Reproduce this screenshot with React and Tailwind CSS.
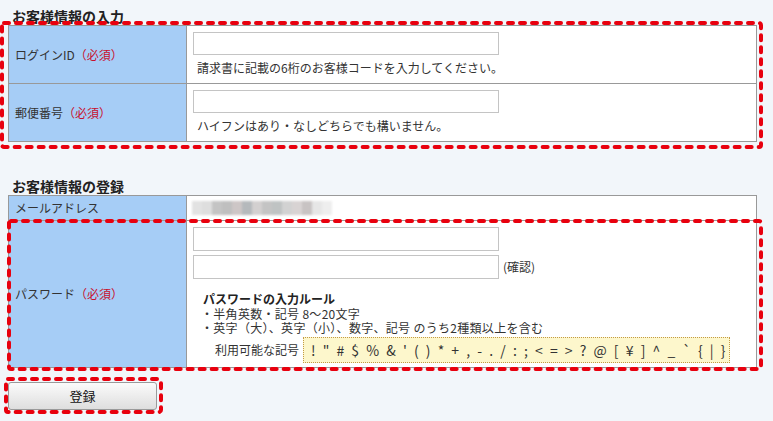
import React from 'react';

const FONT = '"Noto Sans CJK JP", "Noto Sans", sans-serif';
const SYMBOLS = '! " # $ % & \' ( ) * + , - . / : ; < = > ? @ [ ¥ ] ^ _ ` { | }';
const BLUR_GRAYS = ['#e2e2e2', '#dedede', '#c4c4c4', '#bfbfbf', '#cdc6c6', '#b5b9bc', '#d3d0d0', '#c4c4c4', '#bfc3c3', '#d2d2d2', '#d8d3d3', '#c8c3c3', '#e6e6e6', '#eeeeee'];

// red dashed annotation frame laid over a block
function RedFrame({ className }) {
  return (
    <div className={`absolute pointer-events-none ${className}`}>
      <svg className="w-full h-full overflow-visible">
        <rect x="0" y="0" width="100%" height="100%" rx="2" fill="none" stroke="#e8000e"
          strokeWidth="4" strokeDasharray="5 7" strokeLinecap="round" />
      </svg>
    </div>
  );
}

function Required() {
  return <span className="text-[#c8102e]">（必須）</span>;
}

function TextBox({ className = '' }) {
  return <div className={`w-[306px] h-[23px] bg-white border border-[#c4c4c4] ${className}`} />;
}

export default function App() {
  return (
    <div className="min-h-screen bg-[#f2f6fa] text-[#333] text-[12px] pl-[8px] pr-[16px]" style={{ fontFamily: FONT }}>
      <h2 className="pt-[7px] pl-[4px] text-[14px] leading-[18px] font-bold text-[#222]">お客様情報の入力</h2>

      <div className="relative">
        <div className="border border-[#999] bg-white">
          <div className="flex">
            <div className="w-[178px] shrink-0 bg-[#a6cdf6] border-r border-[#999] flex items-center pl-[6px]">
              ログインID<Required />
            </div>
            <div className="flex-1 pl-[6px] py-[6px]">
              <TextBox />
              <p className="mt-[4px] pl-[4px] leading-[18px]">請求書に記載の6桁のお客様コードを入力してください。</p>
            </div>
          </div>
          <div className="flex border-t border-[#999]">
            <div className="w-[178px] shrink-0 bg-[#a6cdf6] border-r border-[#999] flex items-center pl-[6px]">
              郵便番号<Required />
            </div>
            <div className="flex-1 pl-[6px] py-[6px]">
              <TextBox />
              <p className="mt-[4px] pl-[4px] leading-[18px]">ハイフンはあり・なしどちらでも構いません。</p>
            </div>
          </div>
        </div>
        <RedFrame className="left-[-6px] top-[-2px] right-[-4px] bottom-[-5px]" />
      </div>

      <h2 className="mt-[35px] pl-[4px] text-[14px] leading-[18px] font-bold text-[#222]">お客様情報の登録</h2>

      <div className="border border-[#999] bg-white">
        <div className="flex h-[24px]">
          <div className="w-[178px] shrink-0 bg-[#a6cdf6] border-r border-[#999] flex items-center pl-[6px]">
            メールアドレス
          </div>
          <div className="flex-1 flex items-center pl-[5px]">
            <div className="flex blur-[1px]">
              {BLUR_GRAYS.map((c, i) => (
                <div key={i} className="w-[10px] h-[14px]" style={{ background: c }} />
              ))}
            </div>
          </div>
        </div>
        <div className="relative flex border-t border-[#999]">
          <div className="w-[178px] shrink-0 bg-[#a6cdf6] border-r border-[#999] flex items-center pl-[6px]">
            パスワード<Required />
          </div>
          <div className="flex-1 pl-[6px] pt-[6px] pb-[4px]">
            <TextBox className="h-[24px]" />
            <div className="mt-[4px] flex items-center">
              <TextBox className="h-[24px]" />
              <span className="ml-[4px]">(確認)</span>
            </div>
            <p className="mt-[12px] pl-[10px] font-bold leading-[16px] text-[#222]">パスワードの入力ルール</p>
            <p className="pl-[8px] leading-[14px] tracking-[0.3px]">
              ・半角英数・記号 8～20文字<br />
              ・英字（大）、英字（小）、数字、記号 のうち2種類以上を含む
            </p>
            <div className="mt-[2px] flex items-center pl-[22px]">
              <span className="w-[88px]">利用可能な記号</span>
              <div className="h-[26px] w-[427px] flex items-center pl-[7px] bg-[#fdf7cc] border border-dotted border-[#c39a45] text-[14px] tracking-[2px] text-[#333] whitespace-pre">
                {SYMBOLS}
              </div>
            </div>
          </div>
          <RedFrame className="left-[0px] top-[0px] right-[-5px] bottom-[-2px]" />
        </div>
      </div>

      <div className="relative mt-[14px] w-[149px]">
        <button className="w-[149px] h-[28px] rounded-[3px] border border-[#9a9a9a] bg-gradient-to-b from-[#fbfbfb] to-[#dedede] text-[13px] text-[#111]">
          登録
        </button>
        <RedFrame className="left-[-2px] top-[-3px] right-[-4px] bottom-[-2px]" />
      </div>
    </div>
  );
}
